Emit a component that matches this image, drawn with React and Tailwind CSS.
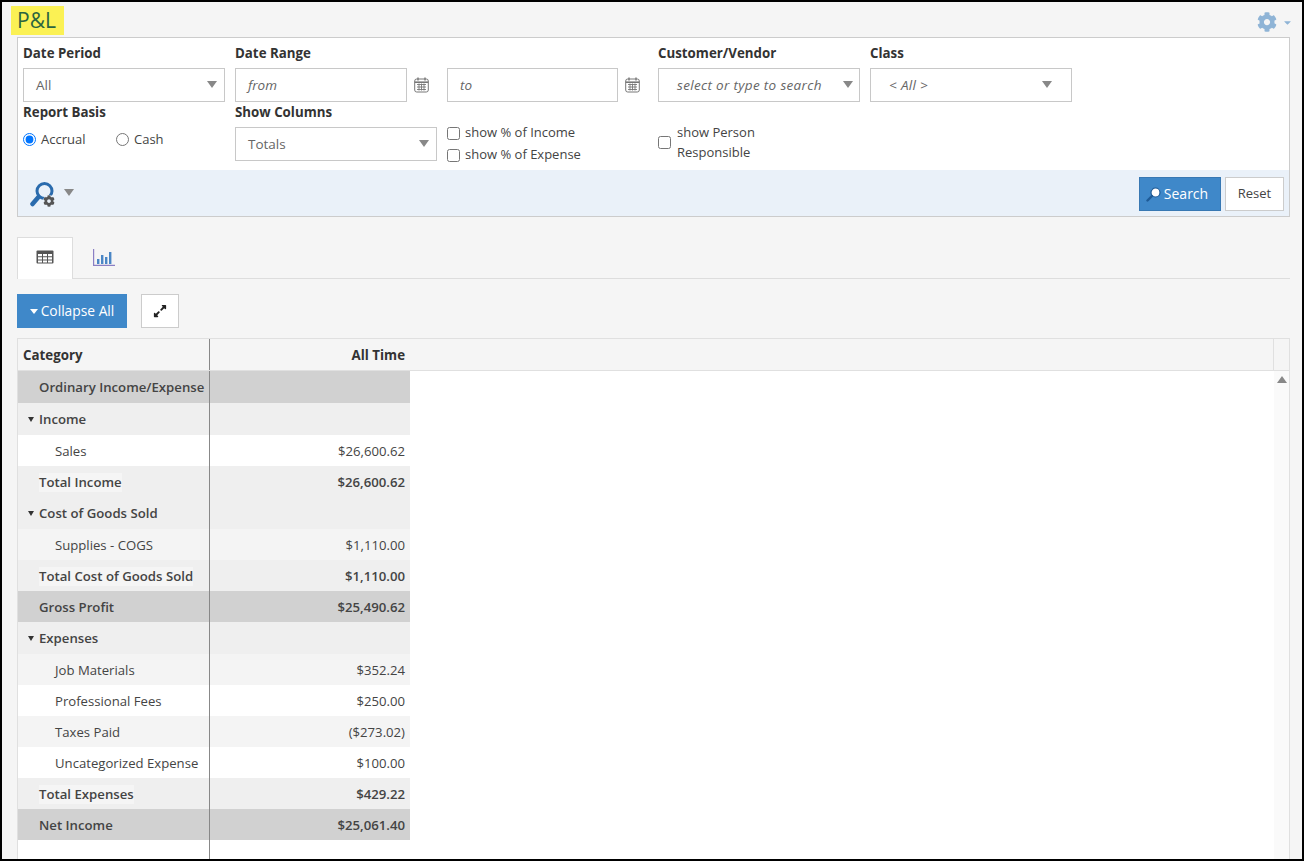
import { FaCog, FaExpandAlt, FaCaretDown } from "react-icons/fa";

const rows = [
  { label: "Ordinary Income/Expense", type: "group", h: "h-8" },
  { label: "Income", type: "section", h: "h-8" },
  { label: "Sales", amount: "$26,600.62", type: "white", h: "h-[31px] pt-px" },
  { label: "Total Income", amount: "$26,600.62", type: "total", h: "h-[31px] pt-px" },
  { label: "Cost of Goods Sold", type: "section", h: "h-8" },
  { label: "Supplies - COGS", amount: "$1,110.00", type: "alt", h: "h-[31px] pt-px" },
  { label: "Total Cost of Goods Sold", amount: "$1,110.00", type: "total", h: "h-[31px] pt-px" },
  { label: "Gross Profit", amount: "$25,490.62", type: "group", h: "h-[31px] pt-px" },
  { label: "Expenses", type: "section", h: "h-8" },
  { label: "Job Materials", amount: "$352.24", type: "alt", h: "h-[31px] pt-px" },
  { label: "Professional Fees", amount: "$250.00", type: "white", h: "h-[31px] pt-px" },
  { label: "Taxes Paid", amount: "($273.02)", type: "alt", h: "h-[31px] pt-px" },
  { label: "Uncategorized Expense", amount: "$100.00", type: "white", h: "h-[31px] pt-px" },
  { label: "Total Expenses", amount: "$429.22", type: "total", h: "h-[31px] pt-px" },
  { label: "Net Income", amount: "$25,061.40", type: "group", h: "h-[31px] pt-px" },
];

const rowBg = {
  group: "bg-[#d1d1d1] font-semibold text-[13.2px]",
  section: "bg-[#efefef] font-semibold text-[13.2px]",
  total: "bg-[#efefef] font-semibold text-[13.2px]",
  alt: "bg-[#f4f4f4] text-[13.15px]",
  white: "bg-white text-[13.15px]",
};

function Caret({ className = "" }) {
  return <span className={`inline-block w-0 h-0 border-x-[5.5px] border-x-transparent border-t-[7px] border-t-[#888] ${className}`} />;
}

function Calendar() {
  return (
    <svg width="15" height="16" viewBox="0 0 15 16" fill="none" stroke="#777" className="shrink-0">
      <rect x="0.7" y="2" width="13.6" height="13" rx="2" />
      <path d="M0.7 5.2h13.6" strokeWidth="1.6" />
      <path d="M4 0.5v3M11 0.5v3" strokeWidth="1.4" />
      <path d="M3 7.5h9M3 10h9M3 12.5h9M5 6.5v7M7.5 6.5v7M10 6.5v7" strokeWidth="0.9" />
    </svg>
  );
}

function SelectBox({ text, width, italic, pad = "pl-3", caretPad = "pr-[7px]" }) {
  return (
    <div className={`h-[34px] ${width} border border-[#c8c8c8] bg-white flex items-center justify-between ${pad} ${caretPad} text-[13.5px] text-[#666] ${italic ? "italic tracking-[0.33px]" : ""}`}>
      <span>{text}</span>
      <Caret className="-mt-0.5" />
    </div>
  );
}

function DateInput({ text, width }) {
  return (
    <div className="flex items-center gap-[7px]">
      <div className={`h-[34px] ${width} border border-[#c8c8c8] bg-white flex items-center pl-3 text-[13.5px] italic text-[#666]`}>{text}</div>
      <Calendar />
    </div>
  );
}

function Label({ children, className = "h-[23px]" }) {
  return <div className={`${className} text-[13.3px] leading-[16px] font-bold text-[#333]`}>{children}</div>;
}

function SearchGear() {
  return (
    <svg width="28" height="26" viewBox="0 0 28 26">
      <circle cx="14.5" cy="10" r="7.5" fill="none" stroke="#2a6bad" strokeWidth="3" />
      <path d="M8.5 16 L2.5 23" stroke="#2a6bad" strokeWidth="4.5" strokeLinecap="round" />
    </svg>
  );
}

export default function App() {
  return (
    <div className="h-[861px] w-[1304px] overflow-hidden bg-[#f5f5f5] border-t-2 border-b-2 border-l-[2px] border-r-2 border-black text-[#444] font-['Open_Sans',sans-serif] text-[13px]">
      <div className="h-[35px] pl-[9px] pr-[9px] pt-1 flex items-start justify-between">
        <div className="h-[29px] w-[53px] pr-[2px] bg-[#fbf154] text-[#2b6540] text-[21px] leading-[29px] text-center">P&amp;L</div>
        <div className="flex items-center gap-[5px] pt-[6px] text-[#8fb4d6]">
          <FaCog size={20} />
          <FaCaretDown size={11} />
        </div>
      </div>

      <div className="ml-[15px] mr-[12px] h-[180px] border border-[#ccc] bg-white flex flex-col">
        <div className="flex-1 pl-[5px]">
          <div className="grid grid-cols-[212px_212px_211px_212px_202px] pt-[7px]">
            <div>
              <Label>Date Period</Label>
              <SelectBox text="All" width="w-[202px]" />
            </div>
            <div>
              <Label>Date Range</Label>
              <DateInput text="from" width="w-[172px]" />
            </div>
            <div>
              <div className="h-[23px]" />
              <DateInput text="to" width="w-[171px]" />
            </div>
            <div>
              <Label>Customer/Vendor</Label>
              <SelectBox text="select or type to search" width="w-[202px]" italic pad="pl-[18px]" caretPad="pr-[6px]" />
            </div>
            <div>
              <Label>Class</Label>
              <SelectBox text="< All >" width="w-[202px]" italic pad="pl-[18px]" caretPad="pr-[19px]" />
            </div>

            <div>
              <Label className="h-[25px] pt-[2px]">Report Basis</Label>
              <div className="flex items-center h-[25px]">
                <label className="flex items-center gap-[5px] w-[93px]">
                  <input type="radio" name="basis" defaultChecked className="w-[13px] h-[13px] m-0" />
                  Accrual
                </label>
                <label className="flex items-center gap-[5px]">
                  <input type="radio" name="basis" className="w-[13px] h-[13px] m-0" />
                  Cash
                </label>
              </div>
            </div>
            <div>
              <Label className="h-[25px] pt-[2px]">Show Columns</Label>
              <SelectBox text="Totals" width="w-[202px]" />
            </div>
            <div className="pt-[22px] flex flex-col gap-[4px]">
              <label className="flex items-center gap-[5px] h-[18px]">
                <input type="checkbox" className="w-[13px] h-[13px] m-0" />
                show % of Income
              </label>
              <label className="flex items-center gap-[5px] h-[18px]">
                <input type="checkbox" className="w-[13px] h-[13px] m-0" />
                show % of Expense
              </label>
            </div>
            <label className="pt-[20px] flex items-center gap-[6px] h-[60px]">
              <input type="checkbox" className="w-[13px] h-[13px] m-0" />
              <span className="leading-[20px]">show Person<br />Responsible</span>
            </label>
          </div>
        </div>
        <div className="h-[46px] pt-[2px] bg-[#eaf1f9] flex items-center justify-between pl-3 pr-[5px]">
          <div className="flex items-center gap-[6px] relative">
            <SearchGear />
            <FaCog size={12} className="absolute left-[13px] top-[14px] text-[#555] bg-[#eaf1f9] rounded-full" />
            <Caret className="-mt-1" />
          </div>
          <div className="flex items-center gap-[4px]">
            <button className="h-[34px] w-[82px] pr-[6px] pb-[2px] bg-[#3f88c9] border border-[#3878b3] text-white text-[14px] flex items-center justify-center gap-[3px]">
              <svg width="15" height="15" viewBox="0 0 15 15" className="mt-[2px]">
                <circle cx="9.5" cy="5.5" r="4.5" fill="#fff" stroke="#1e5a96" strokeWidth="1.2" />
                <path d="M6 9 L1.5 13.5" stroke="#1e5a96" strokeWidth="2.4" strokeLinecap="round" />
              </svg>
              Search
            </button>
            <button className="h-[34px] w-[59px] bg-white border border-[#ccc] text-[#444] text-[13px]">Reset</button>
          </div>
        </div>
      </div>

      <div className="ml-[15px] mr-[12px] mt-5 h-[42px] border-b border-[#ddd] flex">
        <div className="w-[56px] h-[42px] bg-white border border-[#ddd] border-b-0 flex items-center justify-center">
          <svg width="18" height="14" viewBox="0 0 18 14" className="-mt-1">
            <rect x="0.5" y="0.5" width="17" height="13" rx="1" fill="#555" />
            <path d="M2 4h4v2.2H2zM7 4h4v2.2H7zM12 4h4v2.2h-4zM2 7.2h4v2.2H2zM7 7.2h4v2.2H7zM12 7.2h4v2.2h-4zM2 10.4h4v2H2zM7 10.4h4v2H7zM12 10.4h4v2h-4z" fill="#fff" />
          </svg>
        </div>
        <div className="w-[58px] pl-1 flex items-center justify-center">
          <svg width="22" height="17" viewBox="0 0 22 17">
            <path d="M0.6 0v16.4H22" fill="none" stroke="#8a7fc4" strokeWidth="1.2" />
            <path d="M4 10h2.4v5H4zM8 6h2.4v9H8zM12 8h2.4v7H12zM16 3h2.4v12H16z" fill="#4a86c5" />
          </svg>
        </div>
      </div>

      <div className="ml-[15px] mr-[12px] mt-[15px] flex gap-[14px]">
        <button className="h-[34px] w-[110px] pt-px bg-[#3f88c9] text-white text-[13.8px] flex items-center justify-center gap-[3px]">
          <span className="w-0 h-0 border-x-[4.5px] border-x-transparent border-t-[5px] border-t-white" />
          Collapse All
        </button>
        <button className="h-[34px] w-[38px] bg-white border border-[#ccc] flex items-center justify-center text-[#222]">
          <FaExpandAlt size={14} />
        </button>
      </div>

      <div className="ml-[15px] mr-[12px] mt-[10px] h-[521px] border border-[#e0e0e0] border-b-0 bg-white">
        <div className="h-[32px] pt-[3px] flex bg-[#f5f5f5] border-b border-[#e0e0e0] font-bold text-[13.3px] text-[#333]">
          <div className="w-[192px] -mt-[3px] border-r border-[#888] pl-[5px] pt-[3px] flex items-center">Category</div>
          <div className="w-[200px] pr-[5px] flex items-center justify-end">All Time</div>
          <div className="flex-1 -mt-[3px] border-r border-[#e0e0e0]" />
          <div className="w-[15px]" />
        </div>
        <div className="flex h-[488px]">
          <div className="w-[392px] relative">
            {rows.map((r) => (
              <div key={r.label} className={`flex ${r.h} ${rowBg[r.type]}`}>
                <div className="w-[192px] flex items-center">
                  {r.type === "section" && (
                    <span className="ml-[10px] mr-[5px] w-0 h-0 border-x-[3.5px] border-x-transparent border-t-[5px] border-t-[#333]" />
                  )}
                  <span className={`${r.type === "section" ? "" : r.amount && (r.type === "alt" || r.type === "white") ? "ml-[37px]" : "ml-[21px]"} ${r.type === "total" ? "bg-[#f5f5f5]" : ""} leading-[19px]`}>{r.label}</span>
                </div>
                <div className="w-[200px] pr-[5px] flex items-center justify-end leading-[19px]">{r.amount}</div>
              </div>
            ))}
            <div className="absolute left-[191px] top-0 bottom-0 w-px bg-[#888]" />
          </div>
          <div className="flex-1" />
          <div className="w-[15px] bg-[#fafafa] pt-[5px] flex justify-center">
            <span className="w-0 h-0 border-x-[5px] border-x-transparent border-b-[7px] border-b-[#888]" />
          </div>
        </div>
      </div>
    </div>
  );
}
